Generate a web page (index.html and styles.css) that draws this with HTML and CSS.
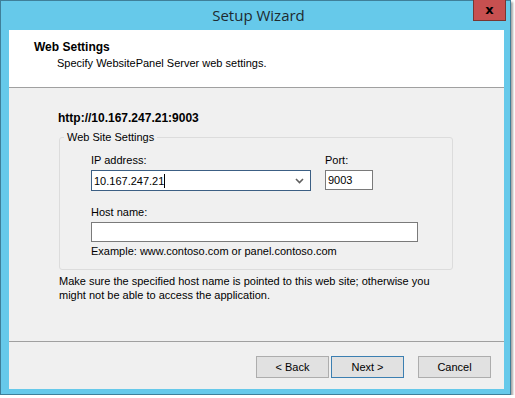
FILE: index.html
```html
<!DOCTYPE html>
<html lang="en">
<head>
    <meta charset="UTF-8">
    <title>Setup Wizard</title>
    <link rel="stylesheet" href="styles.css">
</head>
<body>
    <div class="window">
        <!-- Barra de titulo -->
        <div class="titlebar">
            <span class="title">Setup Wizard</span>
            <button class="close-btn">x</button>
        </div>

        <div class="client">
            <div class="header">
                <h1>Web Settings</h1>
                <p>Specify WebsitePanel Server web settings.</p>
            </div>

            <div class="content">
                <div class="url">http://10.167.247.21:9003</div>

                <fieldset class="group">
                    <legend>Web Site Settings</legend>
                    <div class="row">
                        <div class="field">
                            <label>IP address:</label>
                            <div class="combo">
                                <span>10.167.247.21<span class="caret"></span></span>
                                <svg class="chevron" width="9" height="6" viewBox="0 0 9 6">
                                    <path d="M1 1 L4.5 4.5 L8 1" fill="none" stroke="#606060" stroke-width="1.6"/>
                                </svg>
                            </div>
                        </div>
                        <div class="field">
                            <label>Port:</label>
                            <div class="textbox port">9003</div>
                        </div>
                    </div>
                    <div class="field host">
                        <label>Host name:</label>
                        <div class="textbox hostname"></div>
                        <span class="hint">Example: www.contoso.com or panel.contoso.com</span>
                    </div>
                </fieldset>

                <p class="note">Make sure the specified host name is pointed to this web site; otherwise you might not be able to access the application.</p>
            </div>

            <div class="footer">
                <button class="button">&lt; Back</button>
                <button class="button default">Next &gt;</button>
                <button class="button cancel">Cancel</button>
            </div>
        </div>
    </div>
</body>
</html>
```

FILE: styles.css
```css
body {
    margin: 0;
    background-color: #fff;
    font-family: "Liberation Sans", Arial, sans-serif;
    font-size: 11px;
    color: #000;
}

.window {
    width: 509px;
    height: 393px;
    background-color: #66c9ea;
    border: 1px solid #3f7f99;
    box-shadow: 2px 2px 2px rgba(0, 0, 0, 0.35);
}

.titlebar {
    height: 29px;
    display: flex;
    position: relative;
    justify-content: center;
}

.title {
    font-family: "Open Sans", "Noto Sans", sans-serif;
    font-size: 15px;
    line-height: 29px;
    color: #1e2a30;
    margin-left: 6px;
}

.close-btn {
    position: absolute;
    top: -1px;
    right: 4px;
    width: 33px;
    height: 21px;
    background-color: #c75050;
    border: 1px solid #7a3631;
    border-top: none;
    color: #000;
    font-family: "DejaVu Sans", sans-serif;
    font-weight: bold;
    font-size: 13px;
    line-height: 16px;
    padding: 0;
}

.client {
    width: 495px;
    height: 359px;
    margin-left: 8px;
    background-color: #f0f0f0;
    display: flex;
    flex-direction: column;
}

.header {
    height: 58px;
    background-color: #fff;
    border-bottom: 1px solid #a0a0a0;
    box-sizing: border-box;
    padding: 10px 0 0 25px;
}

.header h1 {
    margin: 0;
    font-size: 12px;
    font-weight: bold;
    line-height: 15px;
}

.header p {
    margin: 2px 0 0 23px;
    line-height: 13px;
}

.content {
    flex: 1;
    padding: 23px 0 0 49px;
    border-bottom: 1px solid #a0a0a0;
}

.url {
    font-size: 12px;
    font-weight: bold;
    line-height: 15px;
}

.group {
    width: 394px;
    height: 139px;
    margin: 5px 0 0 1px;
    padding: 0;
    border: 1px solid #dcdcdc;
    border-radius: 3px;
    box-sizing: border-box;
}

.group legend {
    margin-left: 4px;
    padding: 0 3px 0 3px;
    line-height: 13px;
}

.row {
    display: flex;
    gap: 14px;
    margin: 10px 0 0 31px;
}

.field label {
    display: block;
    line-height: 13px;
    margin-bottom: 3px;
}

.combo {
    width: 210px;
    height: 19px;
    border: 1px solid #3c5f84;
    background-color: #fff;
    display: flex;
    align-items: center;
    justify-content: space-between;
    padding: 0 6px 0 2px;
}

.caret {
    display: inline-block;
    width: 1px;
    height: 14px;
    background-color: #000;
    vertical-align: -3px;
}

.textbox {
    height: 18px;
    border: 1px solid #7a7a7a;
    background-color: #fff;
    line-height: 18px;
    padding-left: 2px;
}

.port {
    width: 44px;
}

.host {
    margin: 15px 0 0 31px;
}

.hostname {
    width: 323px;
    height: 18px;
}

.hint {
    display: block;
    margin-top: 3px;
    line-height: 13px;
}

.note {
    width: 400px;
    margin: 4px 0 0 1px;
    line-height: 14px;
}

.footer {
    height: 47px;
    display: flex;
    align-items: flex-start;
    padding: 14px 0 0 247px;
    box-sizing: border-box;
}

.button {
    width: 73px;
    height: 22px;
    background-color: #e1e1e1;
    border: 1px solid #adadad;
    font-family: "Liberation Sans", Arial, sans-serif;
    font-size: 11px;
    color: #000;
    padding: 0;
    margin-right: 2px;
}

.button.default {
    border-color: #3c7fb1;
}

.button.cancel {
    margin-left: 12px;
}
```
